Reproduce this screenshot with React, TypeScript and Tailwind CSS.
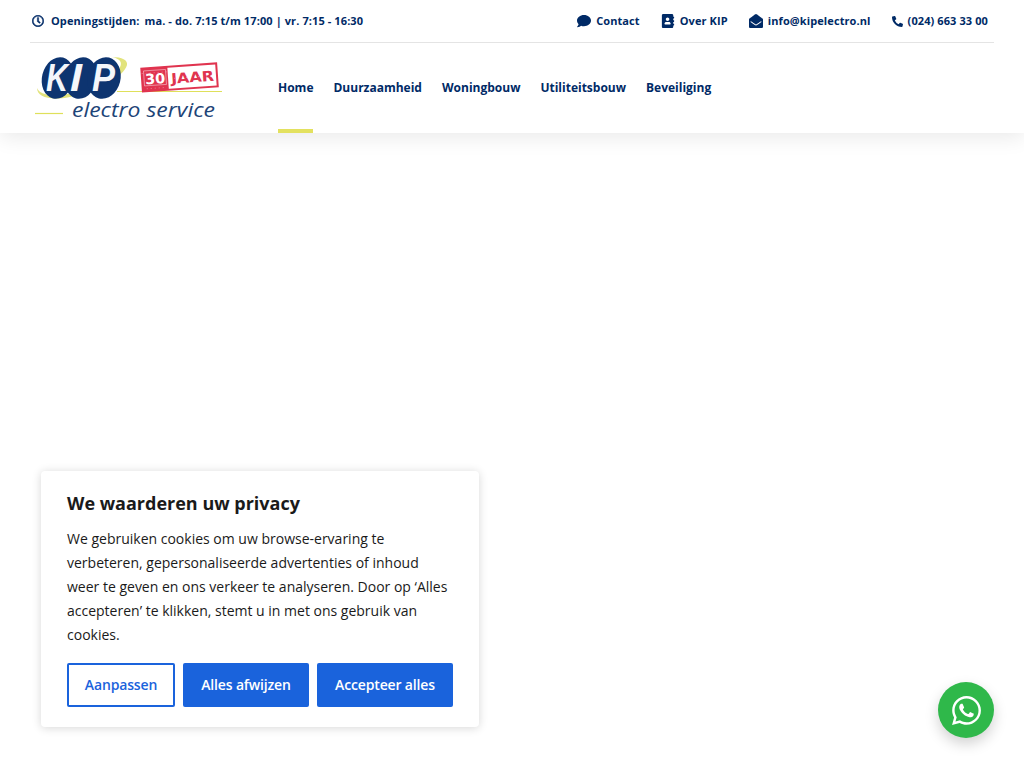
import { FaAddressBook, FaComment, FaEnvelopeOpen, FaPhoneAlt, FaRegClock, FaWhatsapp } from 'react-icons/fa'

const navItems = ['Home', 'Duurzaamheid', 'Woningbouw', 'Utiliteitsbouw', 'Beveiliging']

function Logo() {
  return (
    <svg width="190" height="72" viewBox="0 0 190 72" className="block">
      {/* yellow swoosh and lines */}
      <path d="M3 37 C3 46 16 50 36 46 C62 41 90 26 93 14 C94 9 88 6 78 6 C87 8 89 12 85 18 C76 31 50 42 26 44 C12 45 5 42 3 37 Z" fill="#e2e37c" />
      <path d="M83 40.5 H188" stroke="#dfe05a" strokeWidth="1.2" />
      <path d="M1 62.5 H29" stroke="#dfe05a" strokeWidth="1.2" />
      {/* KIP ovals */}
      <ellipse cx="24" cy="27" rx="16" ry="21" fill="#0d3470" transform="rotate(14 24 27)" />
      <ellipse cx="47" cy="27" rx="16" ry="21" fill="#0d3470" transform="rotate(14 47 27)" />
      <ellipse cx="70" cy="27" rx="16.5" ry="21" fill="#0d3470" transform="rotate(14 70 27)" />
      <text x="12" y="40" fontFamily="'Liberation Sans', sans-serif" fontSize="38" fontWeight="700" fontStyle="italic" fill="#f4f6fa" textLength="22" lengthAdjust="spacingAndGlyphs">K</text>
      <text x="36" y="40" fontFamily="'Liberation Sans', sans-serif" fontSize="38" fontWeight="700" fontStyle="italic" fill="#f4f6fa" textLength="12" lengthAdjust="spacingAndGlyphs">I</text>
      <text x="58" y="40" fontFamily="'Liberation Sans', sans-serif" fontSize="38" fontWeight="700" fontStyle="italic" fill="#f4f6fa" textLength="23" lengthAdjust="spacingAndGlyphs">P</text>
      {/* 30 JAAR stamp */}
      <g transform="rotate(-4 145 26)">
        <rect x="108" y="15" width="75" height="23" fill="#ffffff" stroke="#e0344f" strokeWidth="2" />
        <rect x="108" y="15" width="26" height="23" fill="#e0344f" />
        <rect x="110" y="17.5" width="22" height="15" fill="none" stroke="#f7c4cc" strokeWidth="0.6" />
        <text x="111" y="31" fontFamily="'DejaVu Sans', sans-serif" fontSize="14" fontWeight="700" fill="#ffffff" textLength="20" lengthAdjust="spacingAndGlyphs">30</text>
        <text x="137" y="32" fontFamily="'DejaVu Sans', sans-serif" fontSize="14" fontWeight="700" fill="#e0344f" textLength="43" lengthAdjust="spacingAndGlyphs">JAAR</text>
        <path d="M108 20 H183 M112 35.5 H130 M136 27 H182" stroke="#ffffff" strokeWidth="0.5" strokeDasharray="1 3" opacity="0.7" />
      </g>
      {/* tagline */}
      <text x="38" y="66" fontFamily="'Open Sans', sans-serif" fontSize="20" fontStyle="italic" fill="#1d4477" textLength="143" lengthAdjust="spacingAndGlyphs">electro service</text>
    </svg>
  )
}

function TopLink({ icon, label }: { icon: React.ReactNode; label: string }) {
  return (
    <a className="flex items-center gap-[5px]">
      {icon}
      <span>{label}</span>
    </a>
  )
}

export default function App() {
  return (
    <div className="relative h-[768px] overflow-hidden bg-white font-['Open_Sans',sans-serif] text-[#002a66]">
      <header className="h-[133px] bg-white px-[30px] shadow-[0_4px_20px_rgba(0,0,0,0.09)]">
        {/* Top bar */}
        <div className="flex h-[43px] items-center justify-between border-b border-[#e4e4e4] pr-[5px] pl-[2px] text-[11px] font-bold tracking-[0.1px]">
          <div className="flex items-center">
            <FaRegClock className="mr-[7px] text-[12px] stroke-[20]" />
            <span className="mr-[5px]">Openingstijden:</span>
            <span>ma. - do. 7:15 t/m 17:00 | vr. 7:15 - 16:30</span>
          </div>
          <div className="flex items-center gap-[21px] pr-[1px]">
            <TopLink icon={<FaComment className="text-[14px]" />} label="Contact" />
            <TopLink icon={<FaAddressBook className="text-[14px]" />} label="Over KIP" />
            <TopLink icon={<FaEnvelopeOpen className="text-[14px]" />} label="info@kipelectro.nl" />
            <TopLink icon={<FaPhoneAlt className="text-[11px]" />} label="(024) 663 33 00" />
          </div>
        </div>

        {/* Main nav */}
        <div className="flex h-[90px]">
          <div className="w-[248px] pt-[8px] pl-[4px]">
            <Logo />
          </div>
          <nav className="flex gap-[20px] text-[12px] font-bold">
            {navItems.map((item, i) => (
              <a key={item} className="relative flex h-[90px] items-center">
                {item}
                {i === 0 && <span className="absolute right-0 bottom-0 left-0 h-[4px] bg-[#e3e15f]" />}
              </a>
            ))}
          </nav>
        </div>
      </header>

      {/* Cookie consent */}
      <div className="absolute top-[471px] left-[41px] w-[438px] rounded-[4px] bg-white px-[26px] pt-[19px] pb-[20px] shadow-[0_1px_10px_rgba(0,0,0,0.16)]">
        <h2 className="text-[18px] leading-[26px] font-bold text-[#1a1a1a]">We waarderen uw privacy</h2>
        <p className="mt-[11px] text-[14px] leading-[24px] text-[#1a1a1a]">
          We gebruiken cookies om uw browse-ervaring te verbeteren, gepersonaliseerde advertenties of inhoud weer te geven en ons verkeer te analyseren. Door op ‘Alles accepteren’ te klikken, stemt u in met ons gebruik van cookies.
        </p>
        <div className="mt-[16px] flex gap-[8px] text-[14px] font-semibold tracking-[-0.15px]">
          <button className="h-[44px] w-[108px] rounded-[2px] border-2 border-[#1a63dc] bg-white pb-[2px] text-[#1a63dc]">Aanpassen</button>
          <button className="h-[44px] w-[126px] rounded-[2px] bg-[#1a63dc] pb-[2px] text-white">Alles afwijzen</button>
          <button className="h-[44px] w-[136px] rounded-[2px] bg-[#1a63dc] pb-[2px] text-white">Accepteer alles</button>
        </div>
      </div>

      {/* WhatsApp button */}
      <a className="absolute top-[682px] left-[938px] flex h-[56px] w-[56px] items-center justify-center rounded-full bg-[#2fb84a] text-white shadow-[0_6px_14px_rgba(0,0,0,0.18)]">
        <FaWhatsapp className="text-[33px]" />
      </a>
    </div>
  )
}
